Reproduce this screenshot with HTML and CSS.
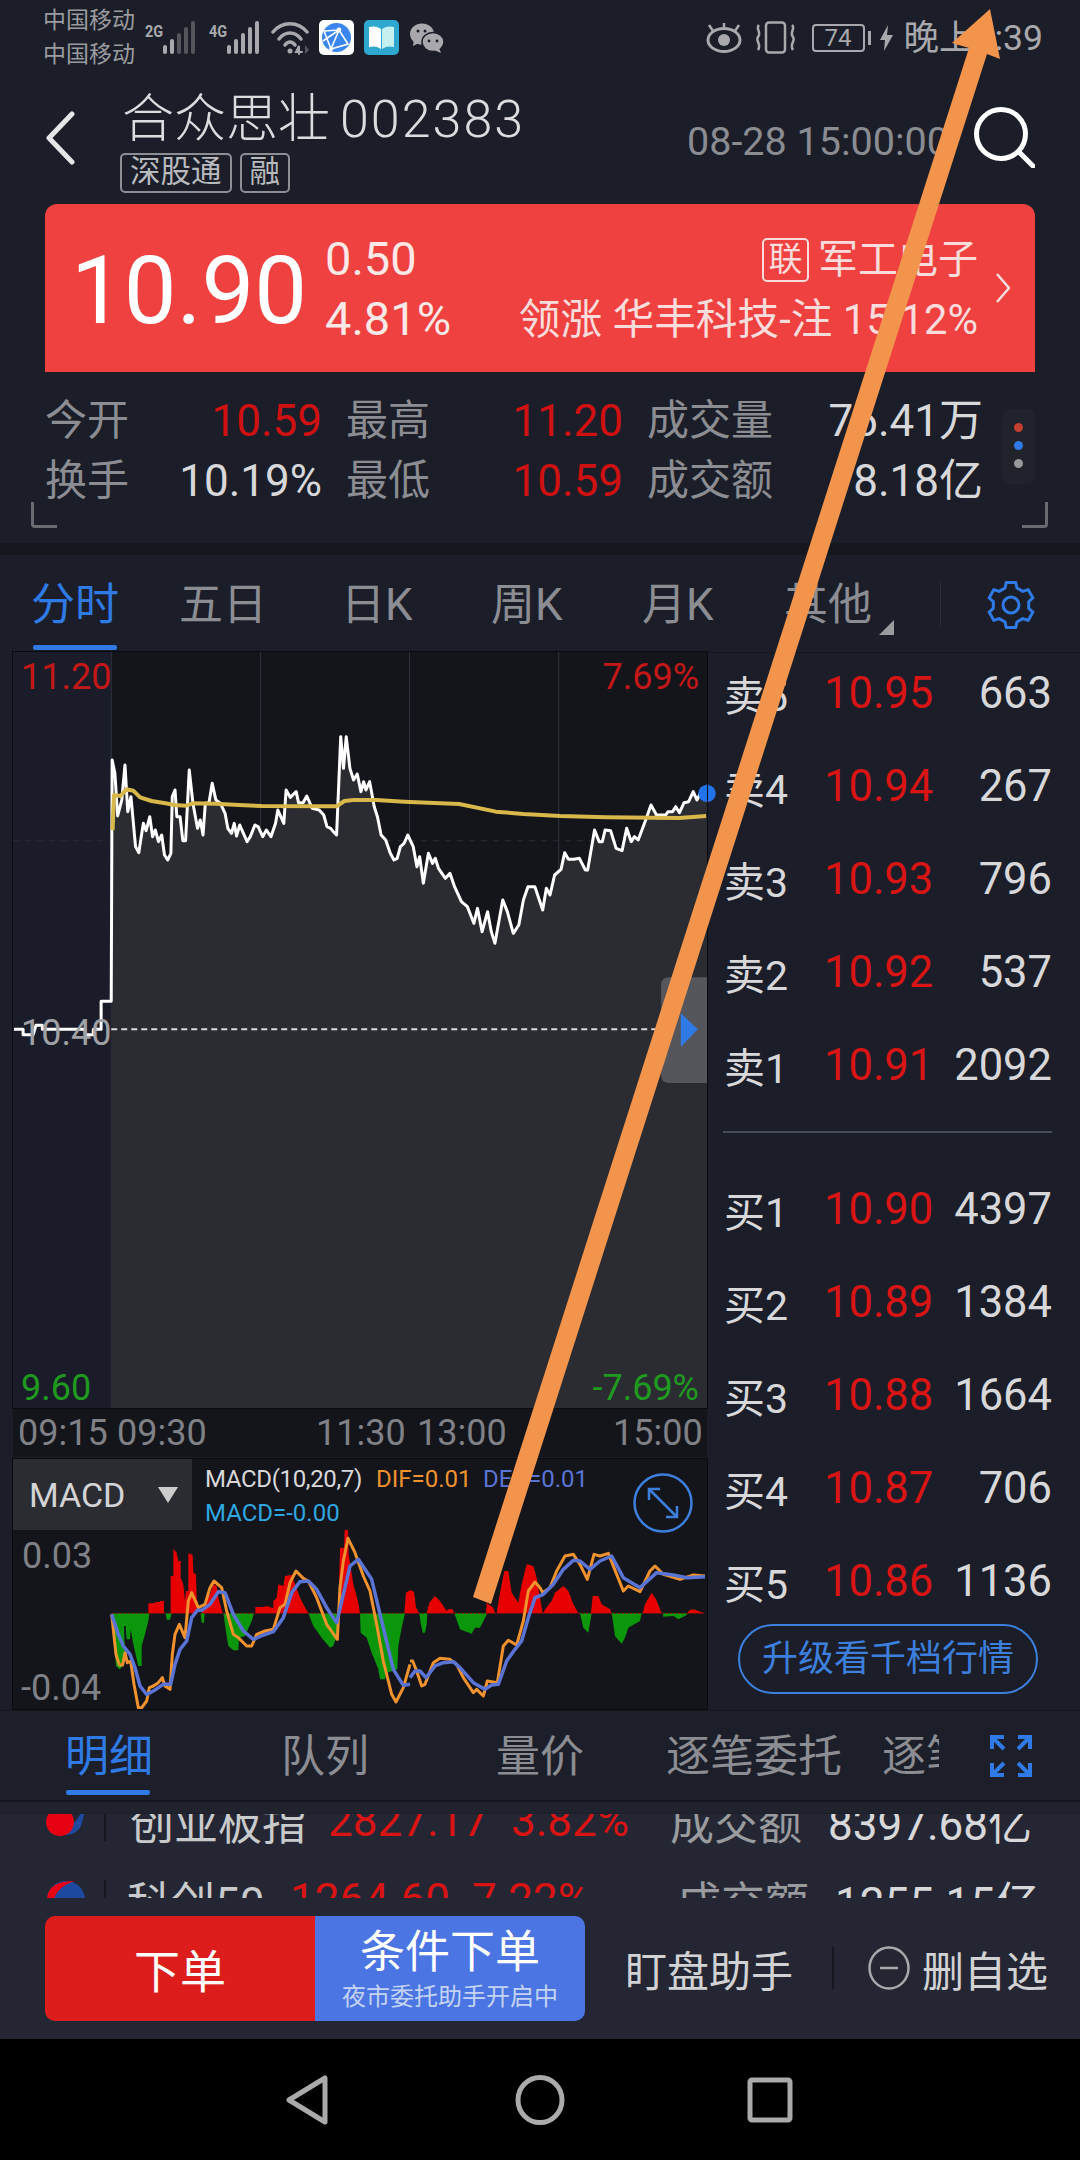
FILE: index.html
```html
<!DOCTYPE html>
<html lang="zh-CN">
<head>
<meta charset="utf-8">
<title>合众思壮 002383</title>
<link rel="stylesheet" href="styles.css">
</head>
<body>
<div class="page">
  <div class="status">
    <div class="carriers"><span>中国移动</span><span>中国移动</span></div>
    <div class="net"><span class="gen">2G</span>
      <svg class="bars" width="35" height="34" viewBox="0 0 35 34"><rect x="1" y="24" width="4" height="9" rx="2" fill="#a9a9ad"/><rect x="8" y="18" width="4" height="15" rx="2" fill="#a9a9ad"/><rect x="15" y="12" width="4" height="21" rx="2" fill="#55565c"/><rect x="22" y="6" width="4" height="27" rx="2" fill="#55565c"/><rect x="29" y="0" width="4" height="33" rx="2" fill="#55565c"/></svg>
    </div>
    <div class="net net-b"><span class="gen">4G</span>
      <svg class="bars" width="35" height="34" viewBox="0 0 35 34"><rect x="1" y="24" width="4" height="9" rx="2" fill="#a9a9ad"/><rect x="8" y="18" width="4" height="15" rx="2" fill="#a9a9ad"/><rect x="15" y="12" width="4" height="21" rx="2" fill="#a9a9ad"/><rect x="22" y="6" width="4" height="27" rx="2" fill="#a9a9ad"/><rect x="29" y="0" width="4" height="33" rx="2" fill="#a9a9ad"/></svg>
    </div>
    <svg class="wifi" width="40" height="34" viewBox="0 0 40 34" fill="none" stroke="#a9a9ad" stroke-width="3.5" stroke-linecap="round"><path d="M2 11C11 0 27 0 36 11"/><path d="M8 18C14 10 24 10 30 18"/><path d="M14 24C17 20 21 20 24 24"/><circle cx="19" cy="30" r="2.5" fill="#a9a9ad" stroke="none"/><path d="M28 33V25L25 31H31" stroke-width="2"/><path d="M34 24V33L38 29Z" fill="#55565c" stroke="none"/></svg>
    <svg class="app" width="35" height="35" viewBox="0 0 35 35"><rect width="35" height="35" rx="5" fill="#fff"/><circle cx="17.5" cy="17.5" r="14.5" fill="#3b86ee"/><path d="M5 11L20 10L29 24L12 29L5 11M20 10L12 29M20 10L4 21" fill="none" stroke="#fff" stroke-width="1.6"/><circle cx="20" cy="10" r="2.4" fill="#fff"/><circle cx="12" cy="29" r="2" fill="#fff"/></svg>
    <svg class="app app-b" width="35" height="35" viewBox="0 0 35 35"><rect width="35" height="35" rx="5" fill="#2fa8cf"/><path d="M17 9C13 6 9 6 5 7V27C9 26 13 26 17 29Z" fill="#fff"/><path d="M18 9C22 6 26 6 30 7V27C26 26 22 26 18 29Z" fill="#c5f0ef"/></svg>
    <svg class="app app-c" width="34" height="30" viewBox="0 0 34 30"><ellipse cx="12" cy="11" rx="12" ry="10.500" fill="#a9a9ad"/><path d="M4 16L3 23L11 19Z" fill="#a9a9ad"/><ellipse cx="23" cy="19" rx="11" ry="9.500" fill="#a9a9ad" stroke="#1b1e29" stroke-width="1.5"/><path d="M29 25L31 30L24 27Z" fill="#a9a9ad"/><circle cx="8" cy="8" r="1.500" fill="#1b1e29"/><circle cx="15" cy="8" r="1.500" fill="#1b1e29"/><circle cx="19" cy="18" r="1.400" fill="#1b1e29"/><circle cx="27" cy="18" r="1.400" fill="#1b1e29"/></svg>
    <div class="status-right">
      <svg width="38" height="30" viewBox="0 0 38 30" fill="none" stroke="#a9a9ad" stroke-width="3"><ellipse cx="19" cy="17" rx="16" ry="11.500"/><circle cx="19" cy="17" r="6" fill="#a9a9ad" stroke="none"/><path d="M8 8L4 2M30 8L34 2M19 4V0" stroke-width="2.500"/></svg>
      <svg class="vib" width="45" height="33" viewBox="0 0 45 33" fill="none" stroke="#a9a9ad" stroke-width="2.500"><rect x="13" y="1.500" width="19" height="30" rx="3"/><path d="M6 4C2 8 9 11 5 16C2 20 9 23 5 29M39 4C43 8 36 11 40 16C43 20 36 23 40 29"/></svg>
      <div class="battery">74</div><span class="nub"></span>
      <svg class="bolt" width="13" height="26" viewBox="0 0 13 26"><path d="M8 0L0 15H5L4 26L13 10H7Z" fill="#a9a9ad"/></svg>
      <span class="time">晚上9:39</span>
    </div>
  </div>

  <header class="header">
    <svg class="back" width="30" height="54" viewBox="0 0 30 54" fill="none" stroke="#e6e6e8" stroke-width="5" stroke-linecap="round" stroke-linejoin="round"><path d="M27 3L4 27L27 51"/></svg>
    <div class="title-wrap">
      <div class="title"><span>合众思壮</span><span class="code">002383</span></div>
      <div class="tags"><span class="tag">深股通</span><span class="tag">融</span></div>
    </div>
    <span class="date">08-28 15:00:00</span>
    <svg class="search" width="62" height="62" viewBox="0 0 62 62" fill="none" stroke="#fff" stroke-width="5" stroke-linecap="round"><circle cx="28" cy="28" r="24.500"/><path d="M46 46L60 60"/></svg>
  </header>

  <section class="quote">
    <div class="price">10.90</div>
    <div class="change"><span>0.50</span><span>4.81%</span></div>
    <div class="sector">
      <div class="sector-top"><span class="lian">联</span><span>军工电子</span></div>
      <div class="sector-lead">领涨 华丰科技-注 15.12%</div>
    </div>
    <svg class="quote-chev" width="16" height="30" viewBox="0 0 16 30" fill="none" stroke="#f6dede" stroke-width="2.500"><path d="M2 1L14 15L2 29"/></svg>
  </section>

  <section class="stats">
    <div class="stat"><span class="lab">今开</span><span class="red">10.59</span></div>
    <div class="stat"><span class="lab">最高</span><span class="red">11.20</span></div>
    <div class="stat"><span class="lab">成交量</span><span class="val">76.41万</span></div>
    <div class="stat"><span class="lab">换手</span><span class="val">10.19%</span></div>
    <div class="stat"><span class="lab">最低</span><span class="red">10.59</span></div>
    <div class="stat"><span class="lab">成交额</span><span class="val">8.18亿</span></div>
    <div class="dots"><i class="d1"></i><i class="d2"></i><i class="d3"></i></div>
    <i class="corner corner-l"></i><i class="corner corner-r"></i>
  </section>
  <div class="band"></div>

  <nav class="tabs">
    <span class="tab on">分时</span><span class="tab">五日</span><span class="tab">日K</span><span class="tab">周K</span><span class="tab">月K</span>
    <span class="tab other">其他<i class="tri"></i></span>
    <i class="vline"></i>
    <svg class="gear" width="48" height="48" viewBox="0 0 48 48" fill="none" stroke="#2f7ae5" stroke-width="3" stroke-linejoin="round"><polygon points="19.200,1.500 28.800,1.500 29.900,7 35.800,10.400 41.100,8.600 45.900,16.900 41.700,20.600 41.700,27.400 45.900,31.100 41.100,39.400 35.800,37.600 29.900,41 28.800,46.500 19.200,46.500 18.100,41 12.200,37.600 6.900,39.400 2.100,31.100 6.300,27.400 6.300,20.600 2.100,16.900 6.900,8.600 12.200,10.400 18.100,7"/><circle cx="24" cy="24" r="8"/></svg>
  </nav>

  <main class="main">
    <div class="left">
      <div class="chart">
        <svg class="plot" width="694" height="756" viewBox="28 36 1512 2268" preserveAspectRatio="none">
          <rect x="28" y="36" width="214" height="2268" fill="#1a1d29"/>
          <path d="M242 36V2304M567 36V2304M892 36V2304M1217 36V2304" stroke="#30343f" stroke-width="1" fill="none"/>
          <path d="M28 602H1540" stroke="#2a2c34" stroke-width="1" stroke-dasharray="6 6" fill="none"/>
          <polygon fill="#2b2c32" points="242,2304 242,1084 244,360 250,400 256,528 265,480 272,375 278,515 285,470 295,620 302,638 312,550 318,572 326,530 332,590 338,570 345,605 352,585 358,645 365,660 372,640 375,470 381,450 385,530 392,530 398,602 404,602 412,390 420,490 430,565 436,540 442,585 447,490 455,488 462,430 470,480 480,490 490,520 496,565 504,580 510,550 515,588 522,555 530,580 538,605 545,590 555,555 562,560 572,590 580,570 590,590 600,550 605,510 618,550 623,450 632,472 645,455 650,488 660,488 668,468 680,505 695,510 705,525 712,560 720,565 726,575 733,585 742,290 748,385 754,290 762,385 770,420 778,402 786,455 792,425 797,450 805,425 815,500 822,530 830,585 840,600 850,640 858,660 865,655 872,620 880,610 888,585 900,620 908,680 914,650 922,730 933,640 942,670 948,655 955,685 970,715 980,700 990,740 1005,785 1018,800 1032,850 1040,805 1050,875 1062,815 1070,875 1078,910 1095,780 1105,815 1118,880 1130,855 1140,780 1150,740 1165,740 1182,810 1190,745 1198,765 1208,705 1222,688 1230,638 1238,658 1250,658 1262,655 1275,690 1280,690 1295,570 1305,605 1312,605 1318,570 1330,572 1342,625 1355,632 1365,565 1375,605 1382,590 1390,600 1405,545 1418,495 1430,525 1450,525 1455,515 1465,515 1472,500 1480,518 1490,488 1500,485 1510,455 1518,480 1525,462 1540,460 1540,2304"/>
          <path d="M242 1168H1540" stroke="#d8d8d8" stroke-width="2" stroke-dasharray="6 4" fill="none"/>
          <polyline fill="none" stroke="#fff" stroke-width="3" stroke-linejoin="round" points="30,1168 50,1168 50,1184 72,1184 78,1156 92,1156 92,1168 185,1168 185,1184 203,1184 203,1168 220,1168 220,1084 242,1084 244,360 250,400 256,528 265,480 272,375 278,515 285,470 295,620 302,638 312,550 318,572 326,530 332,590 338,570 345,605 352,585 358,645 365,660 372,640 375,470 381,450 385,530 392,530 398,602 404,602 412,390 420,490 430,565 436,540 442,585 447,490 455,488 462,430 470,480 480,490 490,520 496,565 504,580 510,550 515,588 522,555 530,580 538,605 545,590 555,555 562,560 572,590 580,570 590,590 600,550 605,510 618,550 623,450 632,472 645,455 650,488 660,488 668,468 680,505 695,510 705,525 712,560 720,565 726,575 733,585 742,290 748,385 754,290 762,385 770,420 778,402 786,455 792,425 797,450 805,425 815,500 822,530 830,585 840,600 850,640 858,660 865,655 872,620 880,610 888,585 900,620 908,680 914,650 922,730 933,640 942,670 948,655 955,685 970,715 980,700 990,740 1005,785 1018,800 1032,850 1040,805 1050,875 1062,815 1070,875 1078,910 1095,780 1105,815 1118,880 1130,855 1140,780 1150,740 1165,740 1182,810 1190,745 1198,765 1208,705 1222,688 1230,638 1238,658 1250,658 1262,655 1275,690 1280,690 1295,570 1305,605 1312,605 1318,570 1330,572 1342,625 1355,632 1365,565 1375,605 1382,590 1390,600 1405,545 1418,495 1430,525 1450,525 1455,515 1465,515 1472,500 1480,518 1490,488 1500,485 1510,455 1518,480 1525,462"/>
          <polyline fill="none" stroke="#d8b84a" stroke-width="4" stroke-linejoin="round" points="245,570 248,465 262,468 275,448 290,452 305,472 330,483 360,490 380,495 405,497 420,490 470,491 520,495 570,498 733,499 750,483 770,480 820,480 880,485 1000,492 1080,515 1140,522 1220,528 1320,532 1420,533 1480,534 1538,528"/>
          <path d="M1540 1012H1457Q1440 1012 1440 1036V1305Q1440 1329 1457 1329H1540Z" fill="#55565c"/>
          <polygon points="1483,1120 1520,1168 1483,1220" fill="#2f7ae5"/>
          <ellipse cx="1540" cy="460" rx="19" ry="26" fill="#2272ea"/>
        </svg>
        <span class="axis a-tl">11.20</span>
        <span class="axis a-tr">7.69%</span>
        <span class="axis a-mid">10.40</span>
        <span class="axis a-bl">9.60</span>
        <span class="axis a-br">-7.69%</span>
      </div>
      <div class="times"><span>09:15</span><span>09:30</span><span>11:30</span><span>13:00</span><span>15:00</span></div>
      <div class="macd">
        <svg class="plot" width="694" height="250" viewBox="13 1458 694 250">
          <g transform="translate(110 1520) scale(.33333)">
            <g fill="#e60000">
              <polygon points="115,277 115,247 135,247 135,243 150,243 150,240 162,240 162,277"/>
              <polygon points="182,277 182,165 190,165 190,84 200,95 205,120 212,120 212,170 220,190 225,240 228,210 235,210 235,97 248,102 250,155 258,160 260,230 262,240 262,277"/>
              <polygon points="275,277 285,250 300,220 310,190 320,195 325,230 335,265 338,277"/>
              <polygon points="436,277 436,258 460,258 470,255 490,262 490,240 500,230 505,190 520,195 525,165 545,162 555,190 570,230 580,250 595,277"/>
              <polygon points="685,277 690,80 702,80 704,27 714,27 716,100 730,190 745,245 750,277"/>
              <polygon points="883,277 888,215 900,208 900,277"/>
            </g>
            <g fill="#0b960b">
              <polygon points="5,277 18,435 28,445 35,440 45,410 42,315 47,315 50,355 60,355 62,325 70,370 85,435 95,435 95,375 105,340 115,300 118,277"/>
              <polygon points="167,277 170,296 180,296 185,277"/>
              <polygon points="272,277 275,305 282,305 284,277"/>
              <polygon points="340,277 350,345 355,375 370,388 385,388 387,350 405,345 425,300 432,277"/>
              <polygon points="595,277 610,315 635,350 660,380 670,375 680,345 682,277"/>
              <polygon points="750,277 752,335 770,350 785,395 805,445 810,475 825,475 830,455 862,445 865,375 875,320 885,277"/>
            </g>
            <path d="M5 277H900" stroke="#8a1010" stroke-width="1" stroke-dasharray="2 2" fill="none"/>
            <polyline fill="none" stroke="#f0922e" stroke-width="3" stroke-linejoin="round" points="5,280 18,400 28,432 38,432 45,395 52,425 62,420 72,490 85,560 95,560 110,540 118,500 130,495 145,485 157,470 165,495 180,505 187,400 195,340 208,310 225,350 235,240 245,215 265,260 285,250 300,200 312,180 335,200 350,270 370,340 385,350 410,375 425,375 440,340 465,330 490,325 510,260 525,250 540,185 558,150 580,172 595,180 620,230 650,310 682,355 690,200 700,120 714,52 735,95 760,165 780,210 800,310 820,420 845,520 858,543 880,500 900,430"/>
            <polyline fill="none" stroke="#5a74d6" stroke-width="3.500" stroke-linejoin="round" points="5,280 25,340 40,375 60,400 75,440 90,495 110,520 130,510 160,490 182,490 195,430 210,385 230,360 245,290 262,268 275,268 300,250 325,212 345,215 370,280 400,330 430,355 460,342 490,332 520,290 545,215 570,182 595,180 620,205 650,260 680,305 700,220 720,135 745,115 785,175 815,300 850,445 880,493 900,490"/>
          </g>
          <g transform="translate(410 1520) scale(.33333)">
            <g fill="#e60000">
              <polygon points="0,277 0,207 12,212 18,260 28,277"/>
              <polygon points="50,277 58,245 75,225 90,240 110,270 115,265 128,265 132,277"/>
              <polygon points="228,277 230,245 250,260 255,277"/>
              <polygon points="260,277 270,215 283,150 295,150 305,215 325,245 335,190 350,130 370,135 380,170 390,230 398,277"/>
              <polygon points="400,277 405,265 425,240 435,215 460,195 475,210 490,250 505,277"/>
              <polygon points="543,277 548,225 565,225 575,250 600,265 605,277"/>
              <polygon points="698,277 705,250 725,215 738,235 755,277"/>
              <polygon points="832,277 838,268 850,265 880,275 885,277"/>
            </g>
            <g fill="#0b960b">
              <polygon points="28,277 32,305 38,335 45,335 50,310 52,277"/>
              <polygon points="133,277 150,325 185,338 195,320 210,320 228,285 230,277"/>
              <polygon points="510,277 520,320 535,335 545,277"/>
              <polygon points="605,277 615,345 635,368 645,350 655,320 690,300 695,277"/>
              <polygon points="758,277 760,287 790,285 805,295 825,285 835,277"/>
            </g>
            <path d="M0 277H885" stroke="#8a1010" stroke-width="1" stroke-dasharray="2 2" fill="none"/>
            <polyline fill="none" stroke="#f0922e" stroke-width="3" stroke-linejoin="round" points="0,420 8,420 20,450 35,495 45,490 70,425 90,412 120,415 140,430 160,470 190,515 200,505 220,525 232,480 262,485 280,375 295,358 320,372 340,300 355,210 375,183 390,200 398,215 420,200 440,150 465,105 490,100 510,130 532,175 552,100 570,105 595,97 620,160 640,210 655,195 690,212 720,150 735,135 760,160 810,175 850,162 885,165"/>
            <polyline fill="none" stroke="#5a74d6" stroke-width="3.500" stroke-linejoin="round" points="0,470 15,450 30,450 48,470 75,435 100,425 130,422 150,440 190,485 225,505 245,492 265,490 290,420 315,385 335,360 355,290 375,230 400,220 430,190 460,145 490,118 510,120 540,145 570,120 605,105 640,170 690,200 740,155 790,162 830,170 885,167"/>
          </g>
        </svg>
        <div class="macd-sel"><span>MACD</span><i class="sel-tri"></i></div>
        <div class="macd-info">
          <div class="m-line"><span class="m-w">MACD(10,20,7)</span><span class="m-o">DIF=0.01</span><span class="m-b">DEA=0.01</span></div>
          <div class="m-c">MACD=-0.00</div>
        </div>
        <svg class="expand" width="60" height="60" viewBox="0 0 60 60" fill="none" stroke="#3d7fdd" stroke-width="2.500"><circle cx="30" cy="30" r="28.500"/><path d="M16 16L44 44M16 27V16H27M44 33V44H33"/></svg>
        <span class="axis a-m1">0.03</span>
        <span class="axis a-m2">-0.04</span>
      </div>
    </div>
    <aside class="book">
      <div class="row"><span>卖5</span><b>10.95</b><em>663</em></div>
      <div class="row"><span>卖4</span><b>10.94</b><em>267</em></div>
      <div class="row"><span>卖3</span><b>10.93</b><em>796</em></div>
      <div class="row"><span>卖2</span><b>10.92</b><em>537</em></div>
      <div class="row"><span>卖1</span><b>10.91</b><em>2092</em></div>
      <hr class="rule">
      <div class="row"><span>买1</span><b>10.90</b><em>4397</em></div>
      <div class="row"><span>买2</span><b>10.89</b><em>1384</em></div>
      <div class="row"><span>买3</span><b>10.88</b><em>1664</em></div>
      <div class="row"><span>买4</span><b>10.87</b><em>706</em></div>
      <div class="row"><span>买5</span><b>10.86</b><em>1136</em></div>
      <div class="upgrade">升级看千档行情</div>
    </aside>
  </main>

  <nav class="subtabs">
    <div class="subtab-row">
      <span class="stab on">明细</span><span class="stab">队列</span><span class="stab">量价</span><span class="stab">逐笔委托</span><span class="stab cut"><span>逐笔成交</span></span>
      <svg class="full" width="42" height="42" viewBox="0 0 42 42" fill="none" stroke="#2f7ae5" stroke-width="4"><path d="M2 14V2H14M2 2L14 14M40 14V2H28M40 2L28 14M2 28V40H14M2 40L14 28M40 28V40H28M40 40L28 28" stroke-linejoin="miter"/></svg>
    </div>
    <div class="subtab-foot"></div>
  </nav>

  <section class="indices">
    <div class="irow">
      <svg class="ilogo" width="42" height="42" viewBox="0 0 42 42"><path d="M4 18A17 17 0 0 0 36 26C38 20 40 12 40 4C34 20 26 28 20 26C16 25 12 12 4 18Z" fill="#1d4aa0"/><circle cx="15" cy="22" r="14" fill="#e60012"/></svg>
      <i class="isep"></i><span class="iname">创业板指</span><b class="inum">2827.17</b><b class="ipct">3.82%</b><span class="ilab">成交额</span><span class="ival">8397.68亿</span>
    </div>
    <div class="irow">
      <svg class="ilogo" width="42" height="42" viewBox="0 0 42 42"><circle cx="21" cy="21" r="19" fill="#1d4aa0"/><path d="M2 21C2 8 12 2 30 2C18 6 10 12 8 24Z" fill="#e60012"/></svg>
      <i class="isep"></i><span class="iname iname-b">科创50</span><b class="inum inum-b">1264.60</b><b class="ipct">7.22%</b><span class="ilab">成交额</span><span class="ival">1255.15亿</span>
    </div>
  </section>

  <footer class="actions">
    <div class="btn btn-red">下单</div>
    <div class="btn btn-blue"><span>条件下单</span><small>夜市委托助手开启中</small></div>
    <span class="act act-a">盯盘助手</span>
    <i class="act-sep"></i>
    <svg class="minus" width="42" height="44" viewBox="0 0 42 44" fill="none" stroke="#a9a9ad" stroke-width="2.500"><ellipse cx="21" cy="22" rx="19.500" ry="20.500"/><path d="M12 22H30"/></svg>
    <span class="act">删自选</span>
  </footer>

  <div class="sysnav">
    <svg width="42" height="50" viewBox="0 0 42 50" fill="none" stroke="#aaa" stroke-width="5" stroke-linejoin="round"><path d="M39 3V47L3 25Z"/></svg>
    <svg width="50" height="50" viewBox="0 0 50 50" fill="none" stroke="#aaa" stroke-width="5"><ellipse cx="25" cy="25" rx="22" ry="22.500"/></svg>
    <svg class="nav-sq" width="46" height="46" viewBox="0 0 46 46" fill="none" stroke="#aaa" stroke-width="5"><rect x="3" y="3" width="40" height="40" rx="2"/></svg>
  </div>

  <svg class="arrow" width="1080" height="2160" viewBox="0 0 1080 2160"><polygon points="473,1597 491,1604 987,54 1000,59 990,9 952,43 969,48" fill="#f2944c"/></svg>
</div>
</body>
</html>
```
FILE: styles.css
```css
* { box-sizing: border-box; }
html, body { margin: 0; padding: 0; background: #1b1e29; }
body { font-family: Roboto, "Noto Sans CJK SC", sans-serif; color: #d8d8da; }
i, em { font-style: normal; }
b { font-weight: 400; }
.page { position: relative; width: 1080px; height: 2160px; overflow: hidden; background: #1b1e29; }

/* status bar */
.status { display: flex; align-items: center; height: 75px; padding: 0 37px 0 43px; color: #9a9b9f; }
.carriers { display: flex; flex-direction: column; width: 102px; font-size: 23px; line-height: 34px; margin-top: 1px; }
.net { display: flex; align-items: flex-start; height: 34px; }
.net-b { margin-left: 12px; }
.gen { width: 17px; font-size: 17px; line-height: 20px; font-weight: 700; color: #a9a9ad; transform: scaleX(.85); transform-origin: left; }
.wifi { margin-left: 10px; }
.app { margin-left: 8px; flex: none; }
.app-b { margin-left: 10px; }
.app-c { margin-left: 11px; }
.status-right { display: flex; align-items: center; margin-left: auto; }
.vib { margin-left: 10px; }
.battery { width: 53px; height: 28px; margin-left: 14px; border: 2px solid #a9a9ad; border-radius: 4px; font-size: 24px; line-height: 24px; text-align: center; color: #a9a9ad; }
.nub { width: 3px; height: 14px; margin-left: 3px; background: #a9a9ad; }
.bolt { margin-left: 9px; }
.time { margin-left: 11px; font-size: 35.500px; line-height: 40px; color: #a9a9ad; }

/* header */
.header { display: flex; align-items: flex-start; height: 129px; padding-left: 45px; }
.back { margin-top: 36px; flex: none; }
.title-wrap { margin-left: 47px; }
.title { display: flex; align-items: center; height: 60px; margin-top: 15px; font-size: 52px; line-height: 60px; color: #dcdcde; font-weight: 300; }
.code { margin-left: 10px; letter-spacing: 2px; }
.tags { display: flex; gap: 8px; margin-left: -2px; margin-top: 3px; }
.tag { height: 40px; padding: 0 8px; border: 2px solid #8d8e93; border-radius: 5px; font-size: 30.500px; line-height: 34px; color: #b9babd; }
.date { position: absolute; left: 687px; top: 120px; font-size: 39.500px; line-height: 44px; color: #8a8c92; }
.search { position: absolute; left: 973px; top: 106px; }

/* quote card */
.quote { position: relative; display: flex; align-items: center; height: 168px; margin: 0 45px; padding-left: 26px; border-radius: 12px 12px 0 0; background: #ef4140; color: #fff; }
.price { width: 254px; font-size: 94px; line-height: 110px; margin-top: 6px; }
.change { display: flex; flex-direction: column; gap: 10px; font-size: 47px; line-height: 50px; color: #fde8e8; margin-top: 2px; }
.sector { margin-left: auto; margin-right: 57px; display: flex; flex-direction: column; align-items: flex-end; color: #fbdcdc; }
.sector-top { display: flex; align-items: center; gap: 9px; font-size: 40px; line-height: 46px; margin-top: 4px; }
.lian { width: 47px; height: 44px; border: 2px solid #fbdcdc; border-radius: 5px; font-size: 34px; line-height: 38px; text-align: center; }
.sector-lead { margin-top: 14px; font-size: 41.700px; line-height: 46px; white-space: nowrap; }
.quote-chev { position: absolute; right: 24px; top: 69px; }

/* stats */
.stats { position: relative; display: grid; grid-template-columns: 277px 277px 336px; column-gap: 24px; grid-auto-rows: 60px; height: 171px; padding: 19px 0 0 45px; font-size: 44px; line-height: 60px; }
.stat { display: flex; justify-content: space-between; }
.lab { color: #8c8d92; font-size: 42px; }
.red { color: #cf1111; }
.val { color: #d8d8da; }
.dots { position: absolute; left: 1002px; top: 37px; display: flex; flex-direction: column; align-items: center; gap: 9px; width: 33px; height: 75px; padding-top: 14px; border-radius: 8px; background: #20222c; }
.dots i { width: 9px; height: 9px; border-radius: 50%; }
.d1 { background: #c2402f; }
.d2 { background: #2f7ae5; }
.d3 { background: #999; }
.corner { position: absolute; top: 130px; width: 26px; height: 26px; border-bottom: 3px solid #6a6b70; }
.corner-l { left: 31px; border-left: 3px solid #6a6b70; border-bottom-left-radius: 4px; }
.corner-r { left: 1022px; border-right: 3px solid #6a6b70; border-bottom-right-radius: 4px; }
.band { height: 12px; background: #15171f; }

/* period tabs */
.tabs { position: relative; display: grid; grid-template-columns: 148px 162px 150px 151px 142px 156px 53px auto; align-items: center; height: 97px; padding: 0 0 0 31px; font-size: 44px; color: #8c8d92; }
.tab { line-height: 60px; position: relative; margin-top: 2px; }
.tab.on { color: #2f7ae5; }
.tab.on::after { content: ""; position: absolute; left: 2px; top: 70px; width: 84px; height: 5px; border-radius: 2px; background: #2f7ae5; }
.other { white-space: nowrap; }
.tri { position: absolute; left: 95px; top: 45px; width: 0; height: 0; border-style: solid; border-width: 0 0 15px 15px; border-color: transparent transparent #9a9b9f transparent; }
.vline { width: 1px; height: 45px; background: #2a2d38; }
.gear { margin-left: -6px; margin-top: 2px; }

/* main */
.main { display: flex; height: 1058px; }
.left { width: 694px; margin-left: 13px; flex: none; }
.chart { position: relative; height: 756px; background: #14151b; outline: 1px solid #0a0b0f; }
.plot { display: block; overflow: visible; }
polyline, .plot path { vector-effect: non-scaling-stroke; }
.axis { position: absolute; font-size: 36px; line-height: 44px; }
.a-tl { left: 8px; top: 3px; color: #c41717; }
.a-tr { right: 8px; top: 3px; color: #c41717; }
.a-mid { left: 8px; top: 359px; color: #a0a1a5; }
.a-bl { left: 8px; top: 714px; color: #1f9a1f; }
.a-br { right: 8px; top: 714px; color: #1f9a1f; }
.times { display: grid; grid-template-columns: 99px 199px 101px 196px auto; height: 48px; margin-top: 1px; padding-left: 5px; background: #14151b; font-size: 36px; line-height: 48px; color: #808186; }
.macd { position: relative; height: 250px; margin-top: 2px; background: #14151b; outline: 1px solid #0a0b0f; }
.macd-sel { position: absolute; left: 0; top: 0; display: flex; align-items: center; width: 179px; height: 71px; padding-left: 16px; background: #2b2c32; font-size: 34px; color: #d4d4d6; }
.sel-tri { width: 0; height: 0; margin-left: 33px; border-style: solid; border-width: 16px 10px 0 10px; border-color: #ccc transparent transparent transparent; }
.macd-info { position: absolute; left: 192px; top: 3px; font-size: 24px; line-height: 34px; }
.m-line { display: grid; grid-template-columns: 171px 107px auto; }
.m-w { color: #d8d8da; letter-spacing: -.35px; }
.m-o { color: #f0922e; }
.m-b { color: #5a74d6; }
.m-c { color: #2fa7e0; }
.expand { position: absolute; left: 620px; top: 14px; }
.a-m1 { left: 9px; top: 75px; color: #808186; }
.a-m2 { left: 8px; top: 207px; color: #808186; }

/* order book */
.book { flex: 1; padding: 0 28px 0 17px; border-top: 1px solid #15171f; }
.row { display: grid; grid-template-columns: 100px 112px 1fr; align-items: center; height: 80px; margin-bottom: 13px; font-size: 43.500px; }
.row span { font-size: 41px; color: #d8d8da; white-space: nowrap; }
.row b { color: #d81414; }
.row em { text-align: right; color: #d8d8da; }
.rule { height: 2px; margin: 26px 0 36px -1px; border: 0; background: #474a57; }
.upgrade { width: 300px; height: 70px; margin: -10px 0 0 14px; border: 2px solid #3d7fdd; border-radius: 35px; font-size: 36px; line-height: 66px; text-align: center; color: #3d7fdd; }

/* detail tabs */
.subtabs { height: 104px; background: #1c1f2a; border-top: 1px solid #15171f; }
.subtab-row { position: relative; display: flex; align-items: center; height: 91px; padding: 3px 0 0 65px; border-bottom: 2px solid #14161e; font-size: 44px; color: #8c8d92; }
.stab { width: 216px; line-height: 60px; white-space: nowrap; flex: none; }
.stab:nth-child(2) { width: 215px; }
.stab:nth-child(3) { width: 170px; }
.stab:nth-child(4) { width: 216px; }
.stab.on { position: relative; color: #2f7ae5; }
.stab.on::after { content: ""; position: absolute; left: 1px; top: 63px; width: 84px; height: 5px; border-radius: 2px; background: #2f7ae5; }
.cut { width: 57px !important; overflow: hidden; }
.full { position: absolute; left: 990px; top: 24px; }
.subtab-foot { height: 11px; background: #20232d; }

/* scrolled list under the tabs */
.indices { height: 84px; overflow: hidden; background: #242733; }
.irow { display: flex; align-items: center; height: 79px; padding-left: 45px; font-size: 44px; color: #d8d8da; white-space: nowrap; }
.irow:first-child { margin-top: -33px; }
.ilogo { flex: none; width: 42px; }
.isep { flex: none; width: 2px; height: 40px; margin-left: 17px; background: #15171f; }
.iname { width: 198px; margin-left: 24px; color: #c9cacc; }
.iname-b { width: 163px; margin-left: 21px; }
.inum { width: 183px; color: #d81414; }
.inum-b { width: 182px; }
.ipct { width: 159px; color: #d81414; }
.irow:last-child .ipct { width: 205px; }
.ilab { width: 158px; color: #9a9b9f; }
.ival { color: #d8d8da; }

/* actions */
.actions { display: flex; align-items: center; height: 141px; padding: 0 0 1px 45px; background: #242733; }
.btn { display: flex; flex-direction: column; align-items: center; justify-content: center; width: 270px; height: 105px; color: #fff; font-size: 46px; }
.btn-red { border-radius: 10px 0 0 10px; background: #dc1d1c; }
.btn-blue { border-radius: 0 10px 10px 0; background: #4a75e2; line-height: 58px; }
.btn-blue span { font-size: 45px; }
.btn-blue small { font-size: 24px; line-height: 30px; color: #c5d3f5; white-space: nowrap; }
.act { font-size: 42px; color: #d2d2d4; white-space: nowrap; }
.act-a { margin-left: 40px; }
.act-sep { width: 2px; height: 42px; margin-left: 39px; background: #15171f; }
.minus { margin-left: 34px; margin-right: 12px; }

/* system nav */
.sysnav { display: flex; align-items: center; height: 122px; padding-left: 286px; gap: 187px; background: #000; }
.nav-sq { margin-left: -5px; }

/* hand-drawn annotation on top of the screenshot */
.arrow { position: absolute; left: 0; top: 0; pointer-events: none; }
```
